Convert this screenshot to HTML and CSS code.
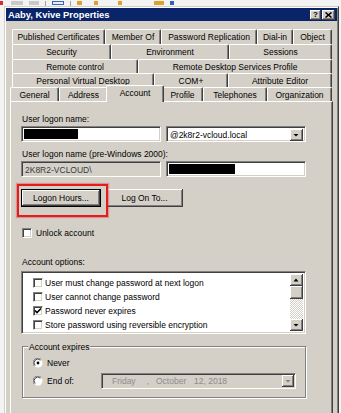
FILE: index.html
```html
<!DOCTYPE html>
<html lang="en">
<head>
<meta charset="utf-8">
<title>Aaby, Kvive Properties</title>
<link rel="stylesheet" href="styles.css">
</head>
<body>
<div class="toolbar">
  <span class="tb red"></span>
  <span class="tb grey w1"></span>
  <span class="tb grey w2"></span>
  <span class="tb sep"></span>
  <span class="tb blue"></span>
  <span class="tb sep"></span>
  <span class="tb orange"></span>
  <span class="tb orange s2"></span>
  <span class="tb orange s3"></span>
  <span class="tb orange bar"></span>
  <span class="tb blue2"></span>
</div>
<div class="dialog">
  <div class="titlebar">
    <span class="title">Aaby, Kvive Properties</span>
    <span class="capbtn help">?</span>
    <span class="capbtn close"><svg width="7" height="6" viewBox="0 0 7 6"><path d="M0.5 0.5 L6.5 5.5 M6.5 0.5 L0.5 5.5" stroke="#000" stroke-width="1.6" fill="none"/></svg></span>
  </div>
  <div class="dbody">
    <div class="tabs">
      <div class="tabrow row1">
        <div class="tab">Published Certificates</div>
        <div class="tab">Member Of</div>
        <div class="tab">Password Replication</div>
        <div class="tab">Dial-in</div>
        <div class="tab">Object</div>
      </div>
      <div class="tabrow row2">
        <div class="tab">Security</div>
        <div class="tab">Environment</div>
        <div class="tab">Sessions</div>
      </div>
      <div class="tabrow row3">
        <div class="tab">Remote control</div>
        <div class="tab">Remote Desktop Services Profile</div>
      </div>
      <div class="tabrow row4">
        <div class="tab">Personal Virtual Desktop</div>
        <div class="tab">COM+</div>
        <div class="tab">Attribute Editor</div>
      </div>
      <div class="tabrow row5">
        <div class="tab">General</div>
        <div class="tab">Address</div>
        <div class="tab sel">Account</div>
        <div class="tab">Profile</div>
        <div class="tab">Telephones</div>
        <div class="tab">Organization</div>
      </div>
    </div>
    <div class="panel">
      <div class="lbl">User logon name:</div>
      <div class="field-row">
        <div class="edit"><span class="redact r1"></span></div>
        <div class="edit combo">
          <span class="combo-text">@2k8r2-vcloud.local</span>
          <span class="ddbtn"><svg width="13" height="12" viewBox="0 0 13 12"><polygon points="3.5,5 8.5,5 6,7.5" fill="#000"/></svg></span>
        </div>
      </div>
      <div class="lbl lbl2">User logon name (pre-Windows 2000):</div>
      <div class="field-row">
        <div class="edit readonly"><span class="ro-text">2K8R2-VCLOUD\</span></div>
        <div class="edit"><span class="redact r2"></span></div>
      </div>
      <div class="btnrow">
        <div class="btnwrap"><div class="btn default">Logon Hours...</div></div>
        <div class="btn">Log On To...</div>
      </div>
      <div class="check unlock"><span class="cb"></span><span>Unlock account</span></div>
      <div class="lbl lbl3">Account options:</div>
      <div class="listbox">
        <div class="items">
          <div class="opt"><span class="cb"></span><span>User must change password at next logon</span></div>
          <div class="opt"><span class="cb"></span><span>User cannot change password</span></div>
          <div class="opt"><span class="cb"><svg width="8" height="8" viewBox="0 0 8 8"><path d="M1 3.5 L3 5.6 L7 1.5" stroke="#000" stroke-width="1.5" fill="none"/></svg></span><span>Password never expires</span></div>
          <div class="opt"><span class="cb"></span><span>Store password using reversible encryption</span></div>
        </div>
        <div class="scroll">
          <span class="sbtn"><svg width="13" height="12" viewBox="0 0 13 12"><polygon points="3.5,7.5 8.5,7.5 6,4.5" fill="#000"/></svg></span>
          <span class="thumb"></span>
          <span class="track"></span>
          <span class="sbtn"><svg width="13" height="12" viewBox="0 0 13 12"><polygon points="3.5,5 8.5,5 6,7.5" fill="#000"/></svg></span>
        </div>
      </div>
      <div class="group">
        <span class="legend">Account expires</span>
        <div class="radio-row">
          <svg class="radio" width="10" height="10" viewBox="0 0 10 10"><circle cx="5" cy="5" r="4.5" fill="#fff"/><path d="M1.4 8.2 A4.5 4.5 0 0 1 8.2 1.4" stroke="#808080" fill="none"/><path d="M2.2 7.4 A3.4 3.4 0 0 1 7.4 2.2" stroke="#404040" fill="none"/><circle cx="5" cy="5" r="1.4" fill="#000"/></svg>
          <span>Never</span>
        </div>
        <div class="radio-row row-end">
          <svg class="radio" width="10" height="10" viewBox="0 0 10 10"><circle cx="5" cy="5" r="4.5" fill="#fff"/><path d="M1.4 8.2 A4.5 4.5 0 0 1 8.2 1.4" stroke="#808080" fill="none"/><path d="M2.2 7.4 A3.4 3.4 0 0 1 7.4 2.2" stroke="#404040" fill="none"/></svg>
          <span>End of:</span>
          <div class="dp">
            <span class="dp-day">Friday</span>
            <span class="dp-comma">,</span>
            <span class="dp-month">October</span>
            <span>12, 2018</span>
            <span class="ddbtn dis"><svg width="12" height="12" viewBox="0 0 12 12"><polygon points="3.5,5 8.5,5 6,7.5" fill="#808080"/></svg></span>
          </div>
        </div>
      </div>
    </div>
  </div>
</div>
</body>
</html>
```

FILE: styles.css
```css
* { box-sizing: border-box; }
html, body { margin: 0; padding: 0; }
body {
  width: 341px;
  height: 413px;
  overflow: hidden;
  background: #f3f3f3;
  font-family: "Liberation Sans", Arial, sans-serif;
  font-size: 8.5px;
  color: #000;
}

/* background toolbar strip */
.toolbar {
  height: 6px;
  display: flex;
  align-items: flex-start;
  gap: 6px;
  padding-top: 1px;
}
.tb { display: block; height: 4px; }
.tb.red { width: 3px; background: #d03030; margin-right: 2px; }
.tb.grey { background: #c8c8c8; }
.tb.w1 { width: 12px; }
.tb.w2 { width: 10px; }
.tb.sep { width: 1px; height: 5px; background: #a0a0a0; }
.tb.blue { width: 12px; border: 1px solid #3a64b8; background: #e8eef8; }
.tb.orange { width: 5px; background: #e0a030; }
.tb.s2 { width: 4px; margin-left: 6px; }
.tb.s3 { width: 4px; margin-left: 14px; }
.tb.bar { width: 10px; margin-left: 26px; }
.tb.blue2 { width: 4px; background: #3060c0; }

/* window */
.dialog {
  margin-left: 4px;
  width: 335px;
  height: 420px;
  background: #d4d0c8;
  border: 1px solid;
  border-color: #d4d0c8 #404040 #404040 #d4d0c8;
  box-shadow: inset 1px 1px #fff, inset -1px -1px #808080;
  padding: 1px;
}
.titlebar {
  height: 13px;
  background: #0a246a;
  display: flex;
  align-items: center;
  padding: 0 2px 0 2px;
}
.title {
  flex: 1;
  color: #fff;
  font-weight: bold;
  font-size: 9.4px;
  line-height: 13px;
  white-space: nowrap;
}
.capbtn {
  height: 10px;
  background: #d4d0c8;
  display: flex;
  align-items: center;
  justify-content: center;
  box-shadow: inset -1px -1px #404040, inset 1px 1px #fff, inset -2px -2px #808080;
  color: #000;
  font-weight: bold;
  font-size: 8px;
  line-height: 10px;
}
.capbtn.help { width: 11px; margin-right: 1px; }
.capbtn.close { width: 13px; }

.dbody { padding: 8px 0 0 4px; }

/* tabs */
.tabs { display: flex; flex-direction: column; }
.tabrow { display: grid; margin-left: 2px; width: 320px; }
.row1 { height: 15px; grid-template-columns: 93px 56px 96px 36px 39px; }
.row2 { height: 15px; grid-template-columns: 99px 118px 103px; }
.row3 { height: 14px; grid-template-columns: 126px 194px; }
.row4 { height: 14px; grid-template-columns: 142px 74px 104px; }
.row5 { height: 14px; margin-left: 0; width: 322px; grid-template-columns: 49px 49px 54px 41px 64px 65px; }
.tab {
  background: #d4d0c8;
  border-top: 1px solid #fff;
  border-left: 1px solid #fff;
  border-right: 1px solid #404040;
  box-shadow: inset -1px 0 #808080;
  border-radius: 2px 2px 0 0;
  display: flex;
  align-items: center;
  justify-content: center;
  white-space: nowrap;
  line-height: 10px;
}
.tab.sel {
  margin: -2px -2px -1px -2px;
  padding-bottom: 3px;
  position: relative;
  z-index: 2;
}

/* page */
.panel {
  position: relative;
  z-index: 1;
  width: 323px;
  height: 330px;
  border: 1px solid;
  border-color: #fff #404040 #404040 #fff;
  box-shadow: inset -1px -1px #808080;
  padding: 12px 0 0 10px;
}
.lbl { height: 10px; line-height: 10px; padding-left: 1px; white-space: nowrap; }
.lbl2 { margin-top: 7px; }
.lbl3 { margin-top: 19px; }

.field-row { display: flex; gap: 5px; margin-top: 2px; height: 16px; }
.edit {
  width: 140px;
  height: 16px;
  background: #fff;
  border: 1px solid;
  border-color: #808080 #fff #fff #808080;
  box-shadow: inset 1px 1px #404040, inset -1px -1px #d4d0c8;
  padding: 2px;
  display: flex;
  align-items: stretch;
}
.redact { display: block; background: #000; }
.r1 { width: 54px; }
.r2 { width: 66px; }
.combo-text { flex: 1; padding-left: 1px; line-height: 12px; white-space: nowrap; }
.ddbtn {
  width: 13px;
  height: 12px;
  background: #d4d0c8;
  box-shadow: inset -1px -1px #404040, inset 1px 1px #fff, inset -2px -2px #808080;
  display: flex;
}
.edit.readonly { background: #d4d0c8; }
.ro-text { padding-left: 1px; line-height: 12px; color: #3a3a3a; }

.btnrow { display: flex; gap: 5px; margin-top: 12px; height: 18px; }
.btnwrap { position: relative; }
.btnwrap::after {
  content: "";
  position: absolute;
  left: -4px;
  top: -5px;
  width: 87px;
  height: 29px;
  border: 2px solid #e41c1c;
  box-shadow: 0 0 1px 1px rgba(228, 40, 40, 0.35);
}
.btn {
  width: 77px;
  height: 18px;
  background: #d4d0c8;
  display: flex;
  align-items: center;
  justify-content: center;
  white-space: nowrap;
  box-shadow: inset -1px -1px #404040, inset 1px 1px #fff, inset -2px -2px #808080;
}
.btn.default { width: 80px; border: 1px solid #000; }

.check { display: flex; align-items: center; gap: 4px; height: 10px; line-height: 10px; padding-left: 1px; }
.unlock { margin-top: 21px; }
.cb {
  width: 10px;
  height: 10px;
  flex: none;
  background: #fff;
  border: 1px solid;
  border-color: #808080 #fff #fff #808080;
  box-shadow: inset 1px 1px #404040, inset -1px -1px #d4d0c8;
  display: flex;
  align-items: center;
  justify-content: center;
}

.listbox {
  margin-top: 4px;
  width: 285px;
  height: 63px;
  background: #fff;
  border: 1px solid;
  border-color: #808080 #fff #fff #808080;
  box-shadow: inset 1px 1px #404040, inset -1px -1px #d4d0c8;
  padding: 2px;
  display: flex;
}
.items { flex: 1; padding-top: 2px; }
.opt { height: 14px; display: flex; align-items: center; gap: 2px; padding-left: 9px; white-space: nowrap; }
.scroll { width: 13px; display: flex; flex-direction: column; }
.sbtn, .thumb {
  display: flex;
  background: #d4d0c8;
  box-shadow: inset -1px -1px #404040, inset 1px 1px #fff, inset -2px -2px #808080;
}
.sbtn { height: 12px; }
.thumb { height: 13px; }
.track {
  flex: 1;
  background: repeating-conic-gradient(#fff 0 25%, #d4d0c8 0 50%) 0 0 / 2px 2px;
}

.group {
  position: relative;
  margin: 12px 0 0 1px;
  width: 284px;
  height: 52px;
  border: 1px solid #808080;
  box-shadow: 1px 1px 0 #fff, inset 1px 1px 0 #fff;
  padding: 11px 9px 0 10px;
}
.legend {
  position: absolute;
  left: 5px;
  top: -5px;
  line-height: 10px;
  padding: 0 1px;
  background: #d4d0c8;
  white-space: nowrap;
}
.radio-row { display: flex; align-items: center; gap: 4px; height: 10px; line-height: 10px; }
.radio { flex: none; display: block; }
.row-end { margin-top: 5px; height: 16px; }
.dp {
  margin-left: auto;
  width: 195px;
  height: 16px;
  border: 1px solid;
  border-color: #808080 #fff #fff #808080;
  box-shadow: inset 1px 1px #404040, inset -1px -1px #d4d0c8;
  padding: 1px 1px 1px 10px;
  display: flex;
  align-items: center;
  color: #8c8c8c;
  white-space: nowrap;
}
.dp-day { width: 35px; }
.dp-comma { width: 9px; }
.dp-month { width: 38px; }
.ddbtn.dis { margin-left: auto; width: 12px; height: 12px; }
```
